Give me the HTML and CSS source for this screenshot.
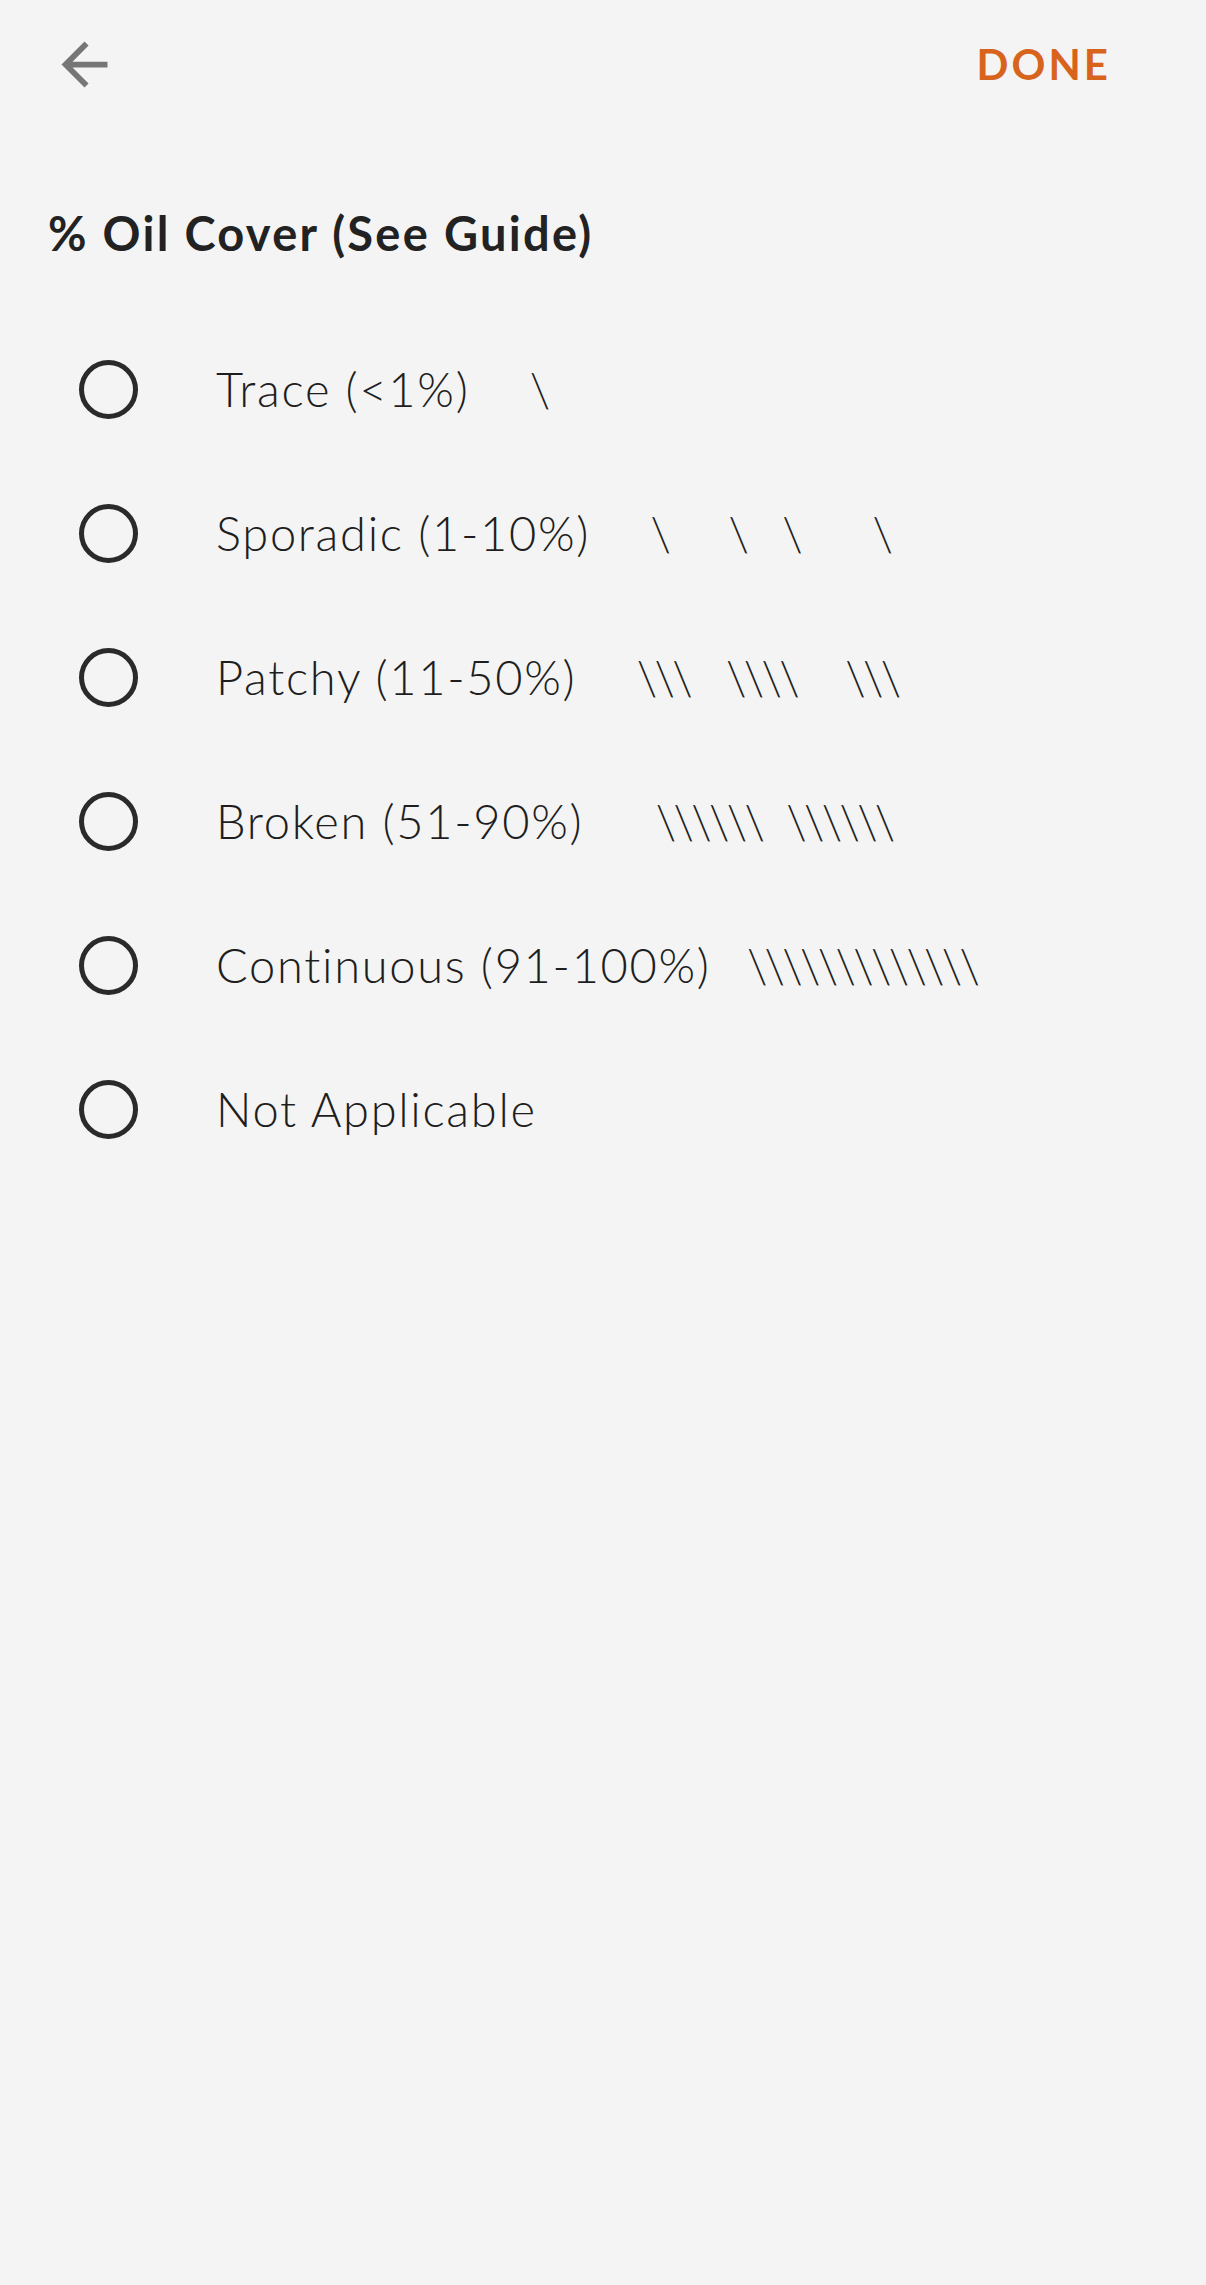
FILE: index.html
```html
<!DOCTYPE html>
<html lang="en">
<head>
    <meta charset="UTF-8">
    <meta name="viewport" content="width=device-width, initial-scale=1.0">
    <title>% Oil Cover</title>
    <link rel="stylesheet" href="styles.css">
</head>
<body>
    <header class="top-bar">
        <button class="back-button" aria-label="Back">
            <svg viewBox="0 0 24 24" width="69" height="69">
                <path d="M20 11H7.83l5.59-5.59L12 4l-8 8 8 8 1.41-1.41L7.83 13H20v-2z" fill="#767676"/>
            </svg>
        </button>
        <button class="done-button">DONE</button>
    </header>

    <div class="container">
        <h1 class="question">% Oil Cover (See Guide)</h1>

        <ul class="options">
            <li class="option"><span class="radio"></span><span class="label">Trace (&lt;1%)<span class="marks">     \</span></span></li>
            <li class="option"><span class="radio"></span><span class="label">Sporadic (1-10%)<span class="marks">     \     \   \      \</span></span></li>
            <li class="option"><span class="radio"></span><span class="label">Patchy (11-50%)<span class="marks">     \\\   \\\\    \\\</span></span></li>
            <li class="option"><span class="radio"></span><span class="label">Broken (51-90%)<span class="marks">      \\\\\\  \\\\\\</span></span></li>
            <li class="option"><span class="radio"></span><span class="label">Continuous (91-100%)<span class="marks">   \\\\\\\\\\\\\</span></span></li>
            <li class="option"><span class="radio"></span><span class="label">Not Applicable</span></li>
        </ul>
    </div>
</body>
</html>
```

FILE: styles.css
```css
body {
    font-family: Lato, "Open Sans", sans-serif;
    margin: 0;
    padding: 0;
    background-color: #f4f4f4;
    color: #222;
}

.top-bar {
    display: flex;
    align-items: center;
    justify-content: space-between;
    height: 128px;
    padding: 0 95px 0 50px;
}

.back-button {
    background: none;
    border: none;
    padding: 0;
    display: flex;
    cursor: pointer;
}

.done-button {
    background: none;
    border: none;
    padding: 0;
    font-family: Lato, sans-serif;
    font-size: 42px;
    font-weight: 700;
    letter-spacing: 3px;
    color: #d8631d;
    cursor: pointer;
}

.container {
    padding: 0 0 0 48px;
}

.question {
    margin: 0;
    padding-top: 77px;
    font-size: 47px;
    font-weight: 700;
    letter-spacing: 2.3px;
    line-height: 56px;
    color: #222;
}

.options {
    list-style: none;
    margin: 0;
    padding: 56px 0 0 0;
}

.option {
    display: flex;
    align-items: center;
    height: 144px;
}

.radio {
    box-sizing: border-box;
    width: 59px;
    height: 59px;
    margin-left: 31px;
    border: 5px solid #2a2a2a;
    border-radius: 50%;
    flex-shrink: 0;
}

.label {
    margin-left: 78px;
    font-size: 47px;
    font-weight: 300;
    letter-spacing: 1.7px;
    white-space: pre;
    color: #1e1e1e;
}

.marks {
    letter-spacing: -2.7px;
    word-spacing: 2px;
}
```
